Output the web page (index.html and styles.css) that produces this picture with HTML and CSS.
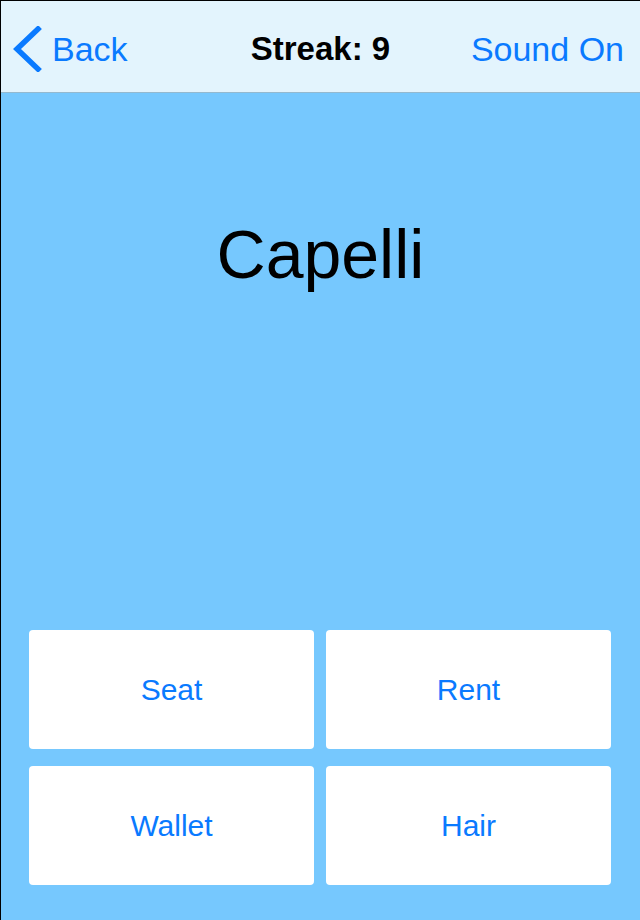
FILE: index.html
```html
<!DOCTYPE html>
<html>
<head>
<meta charset="utf-8">
<link rel="stylesheet" href="styles.css">
</head>
<body>
<div class="screen">
  <header class="navbar">
    <div class="nav-left">
      <svg class="chevron" width="30" height="46" viewBox="0 0 30 46">
        <path d="M26 3 L5 23 L26 43" fill="none" stroke="#0a7aff" stroke-width="5.5" stroke-linecap="square" stroke-linejoin="miter"/>
      </svg>
      <span class="nav-link">Back</span>
    </div>
    <div class="nav-title">Streak: 9</div>
    <div class="nav-right"><span class="nav-link">Sound On</span></div>
  </header>
  <main class="content">
    <div class="word">Capelli</div>
    <div class="answers">
      <button class="answer">Seat</button>
      <button class="answer">Rent</button>
      <button class="answer">Wallet</button>
      <button class="answer">Hair</button>
    </div>
  </main>
</div>
</body>
</html>
```
FILE: styles.css
```css
html, body {
  margin: 0;
  padding: 0;
}
body {
  font-family: "Liberation Sans", Arial, sans-serif;
  background: #76c8fe;
}
.screen {
  width: 639px;
  height: 919px;
  border-top: 1px solid #000;
  border-left: 1px solid #000;
  display: flex;
  flex-direction: column;
  background: #76c8fe;
}
.navbar {
  height: 87px;
  padding-top: 4px;
  background: #e3f4fd;
  border-bottom: 1px solid #94b9cf;
  display: grid;
  grid-template-columns: 1fr auto 1fr;
  align-items: center;
}
.nav-left {
  display: flex;
  align-items: center;
  padding-left: 11px;
  gap: 10px;
}
.chevron {
  display: block;
}
.nav-link {
  color: #0a7aff;
  font-size: 34px;
  line-height: 1;
}
.nav-title {
  font-weight: bold;
  font-size: 33px;
  line-height: 1;
  color: #000;
}
.nav-right {
  display: flex;
  justify-content: flex-end;
  padding-right: 16px;
}
.content {
  flex: 1;
  display: flex;
  flex-direction: column;
}
.word {
  padding-top: 127px;
  text-align: center;
  font-size: 68px;
  line-height: 1;
  color: #000;
}
.answers {
  margin-top: auto;
  display: grid;
  grid-template-columns: 1fr 1fr;
  grid-auto-rows: 119px;
  column-gap: 12px;
  row-gap: 17px;
  padding: 0 29px 35px 28px;
}
.answer {
  border: none;
  border-radius: 4px;
  background: #fff;
  color: #0a7aff;
  font-family: "Liberation Sans", Arial, sans-serif;
  font-size: 30px;
  padding: 0;
  margin: 0;
}
```
